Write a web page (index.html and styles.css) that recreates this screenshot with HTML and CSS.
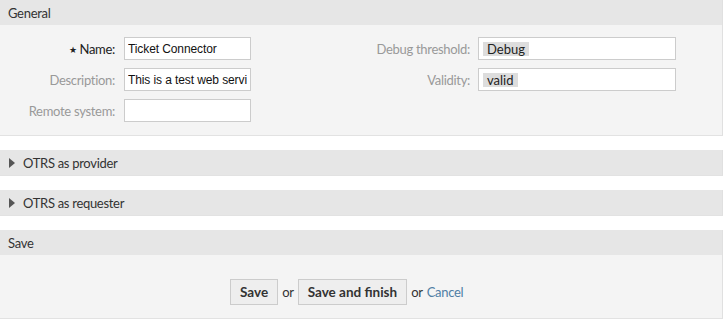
FILE: index.html
```html
<!DOCTYPE html>
<html lang="en">
<head>
  <meta charset="UTF-8">
  <meta name="viewport" content="width=device-width, initial-scale=1.0">
  <title>Web Service</title>
  <link rel="stylesheet" href="styles.css">
</head>
<body>
  <div class="widget">
    <div class="widget-header"><h2>General</h2></div>
    <div class="widget-content">
      <div class="form-cols">
        <div class="col col-left">
          <div class="row">
            <label class="mandatory" for="name"><span class="star">&#9733;</span> Name:</label>
            <input type="text" id="name" value="Ticket Connector">
          </div>
          <div class="row">
            <label for="description">Description:</label>
            <input type="text" id="description" value="This is a test web service">
          </div>
          <div class="row">
            <label for="remote">Remote system:</label>
            <input type="text" id="remote" value="">
          </div>
        </div>
        <div class="col col-right">
          <div class="row">
            <label>Debug threshold:</label>
            <div class="select"><span class="tag">Debug</span></div>
          </div>
          <div class="row">
            <label>Validity:</label>
            <div class="select"><span class="tag">valid</span></div>
          </div>
        </div>
      </div>
    </div>
  </div>

  <div class="widget collapsed">
    <div class="widget-header"><span class="toggle"></span><h2>OTRS as provider</h2></div>
  </div>

  <div class="widget collapsed">
    <div class="widget-header"><span class="toggle"></span><h2>OTRS as requester</h2></div>
  </div>

  <div class="widget">
    <div class="widget-header"><h2>Save</h2></div>
    <div class="widget-content actions">
      <button type="button">Save</button>
      <span class="or">or</span>
      <button type="button">Save and finish</button>
      <span class="or">or</span>
      <a href="#" class="cancel">Cancel</a>
    </div>
  </div>
</body>
</html>
```

FILE: styles.css
```css
body {
  margin: 0;
  font-family: Lato, "Open Sans", sans-serif;
  font-size: 13px;
  letter-spacing: -0.3px;
  color: #333;
  background-color: #fff;
}
.widget {
  width: 722px;
  margin-bottom: 14px;
  border-right: 1px solid #e0e0e0;
  border-bottom: 1px solid #e2e2e2;
}
.widget-header {
  display: flex;
  align-items: center;
  height: 25px;
  padding: 0 8px;
  background-color: #e6e6e6;
}
.widget-header h2 {
  margin: 0;
  font-size: 13px;
  font-weight: normal;
  color: #333;
}
.toggle {
  width: 0;
  height: 0;
  margin: 0 8px 0 1px;
  border-top: 5px solid transparent;
  border-bottom: 5px solid transparent;
  border-left: 6px solid #555;
}
.widget-content {
  background-color: #f4f4f4;
  padding: 12px 0 13px;
}
.form-cols {
  display: flex;
}
.col {
  display: flex;
  flex-direction: column;
  gap: 8px;
}
.col-left {
  width: 361px;
}
.row {
  display: flex;
  align-items: center;
  height: 23px;
}
.row label {
  text-align: right;
  color: #999;
}
.col-left label {
  width: 115px;
  margin-right: 9px;
}
.col-right label {
  width: 109px;
  margin-right: 8px;
}
.row label.mandatory {
  color: #222;
}
.star {
  font-size: 9px;
  vertical-align: 1px;
}
input[type="text"] {
  box-sizing: border-box;
  width: 127px;
  height: 23px;
  margin: 0;
  padding: 2px 3px;
  border: 1px solid #ccc;
  background-color: #fff;
  font-family: "Liberation Sans", Arial, sans-serif;
  font-size: 12px;
  letter-spacing: -0.1px;
  color: #111;
}
.select {
  box-sizing: border-box;
  display: flex;
  align-items: center;
  width: 198px;
  height: 23px;
  padding: 0 4px;
  border: 1px solid #ccc;
  background-color: #fff;
}
.tag {
  padding: 0 4px;
  line-height: 14px;
  background-color: #ddd;
  color: #222;
  letter-spacing: 0;
}
.actions {
  display: flex;
  align-items: center;
  padding: 24px 0 13px 230px;
}
button {
  height: 26px;
  padding: 0 9px;
  border: 1px solid #ccc;
  background-color: #eee;
  font-family: Lato, "Open Sans", sans-serif;
  font-size: 13.5px;
  font-weight: bold;
  letter-spacing: 0;
  color: #333;
  cursor: pointer;
}
.or {
  margin: 0 4px;
}
.cancel {
  color: #4f7ea5;
  text-decoration: none;
}
```
